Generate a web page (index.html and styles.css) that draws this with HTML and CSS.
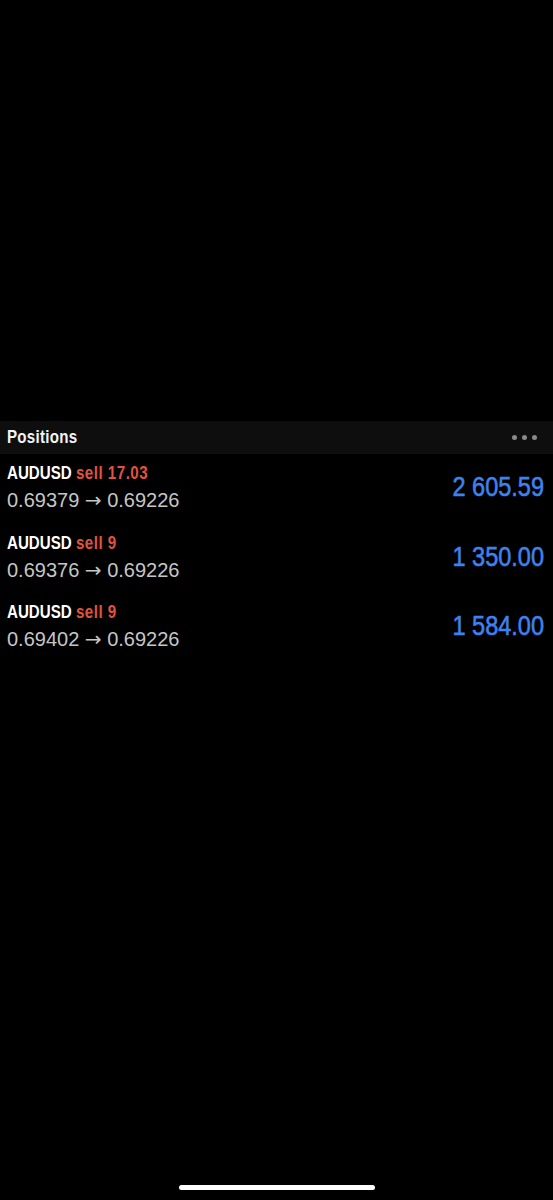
FILE: index.html
```html
<!DOCTYPE html>
<html lang="en">
<head>
    <meta charset="UTF-8">
    <meta name="viewport" content="width=device-width, initial-scale=1.0">
    <title>Positions</title>
    <link rel="stylesheet" href="styles.css">
</head>
<body>
    <main class="screen">
        <section class="positions">
            <header class="section-head">
                <h2>Positions</h2>
                <div class="more"><span></span><span></span><span></span></div>
            </header>

            <div class="position">
                <div class="info">
                    <p class="title">AUDUSD <span class="side">sell 17.03</span></p>
                    <p class="prices">0.69379 <span class="arrow">&rarr;</span> 0.69226</p>
                </div>
                <div class="profit">2 605.59</div>
            </div>

            <div class="position">
                <div class="info">
                    <p class="title">AUDUSD <span class="side">sell 9</span></p>
                    <p class="prices">0.69376 <span class="arrow">&rarr;</span> 0.69226</p>
                </div>
                <div class="profit">1 350.00</div>
            </div>

            <div class="position">
                <div class="info">
                    <p class="title">AUDUSD <span class="side">sell 9</span></p>
                    <p class="prices">0.69402 <span class="arrow">&rarr;</span> 0.69226</p>
                </div>
                <div class="profit">1 584.00</div>
            </div>
        </section>

        <div class="home-bar"></div>
    </main>
</body>
</html>
```

FILE: styles.css
```css
/* Global Styles */
* {
    margin: 0;
    padding: 0;
    box-sizing: border-box;
}

body {
    background-color: #000;
    color: #fff;
    font-family: 'Liberation Sans', Arial, sans-serif;
}

.screen {
    height: 1200px;
    display: flex;
    flex-direction: column;
    padding-top: 421px;
}

/* condensed headings: the app font is narrower than Arial */
.section-head h2,
.title {
    font-weight: bold;
    font-size: 18px;
    transform: scaleX(0.84);
    transform-origin: left center;
}

.section-head {
    height: 33px;
    background-color: #0e0e0e;
    display: flex;
    align-items: center;
    justify-content: space-between;
    padding: 0 16px 0 7px;
}

.section-head h2 {
    color: #f2f2f2;
    letter-spacing: 0.3px;
}

.more {
    display: flex;
    gap: 5px;
}

.more span {
    width: 5px;
    height: 5px;
    border-radius: 50%;
    background-color: #8a8a8a;
}

.position {
    height: 69.5px;
    display: flex;
    align-items: flex-start;
    justify-content: space-between;
    padding: 0 9px 0 7px;
}

.info {
    padding-top: 8px;
}

.title {
    line-height: 22px;
    color: #fff;
}

.side {
    color: #e0533f;
    letter-spacing: 0.6px;
}

.prices {
    font-size: 20px;
    line-height: 33px;
    color: #c6c6c6;
}

.arrow {
    font-family: 'DejaVu Sans', sans-serif;
    font-size: 20px;
}

.profit {
    padding-top: 17px;
    font-size: 28px;
    line-height: 32px;
    color: #3f82ee;
    -webkit-text-stroke: 0.6px #3f82ee;
    transform: scaleX(0.84);
    transform-origin: right top;
}

.home-bar {
    margin: auto auto 10px;
    width: 196px;
    height: 5px;
    border-radius: 3px;
    background-color: #fff;
}
```
